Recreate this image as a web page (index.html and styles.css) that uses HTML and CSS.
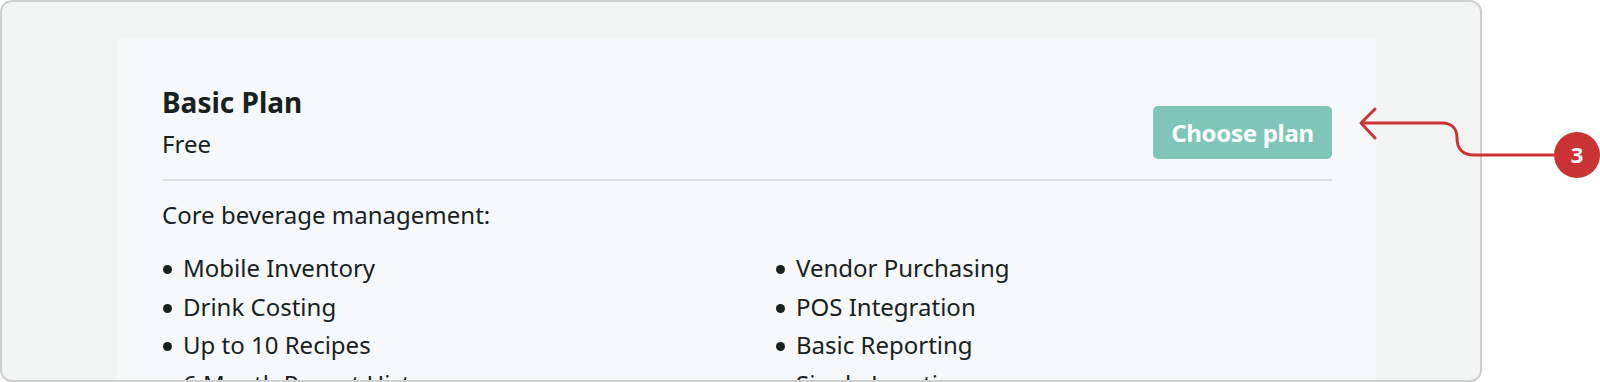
FILE: index.html
```html
<!DOCTYPE html>
<html>
<head>
<meta charset="utf-8">
<link rel="stylesheet" href="styles.css">
</head>
<body>
<div class="frame">
  <div class="card">
    <div class="card-head">
      <div class="plan">
        <div class="plan-name">Basic Plan</div>
        <div class="plan-price">Free</div>
      </div>
      <button class="choose">Choose plan</button>
    </div>
    <div class="divider"></div>
    <p class="intro">Core beverage management:</p>
    <ul class="features">
      <li>Mobile Inventory</li>
      <li>Vendor Purchasing</li>
      <li>Drink Costing</li>
      <li>POS Integration</li>
      <li>Up to 10 Recipes</li>
      <li>Basic Reporting</li>
      <li>6 Month Report History</li>
      <li>Single Location</li>
    </ul>
  </div>
</div>
<svg class="callout" width="1600" height="382" viewBox="0 0 1600 382">
  <path d="M1375 109 L1361 123 L1375 138" fill="none" stroke="#cc3434" stroke-width="3" stroke-linecap="round" stroke-linejoin="round"/>
  <path d="M1362 123 H1442 C1452 123 1457 129 1457 138 C1457 148 1462 155 1474 155 H1556" fill="none" stroke="#cc3434" stroke-width="3" stroke-linecap="round"/>
  <circle cx="1577" cy="155" r="23" fill="#c93333"/>
  <text x="1577" y="163" class="callout-num" text-anchor="middle">3</text>
</svg>
</body>
</html>
```
FILE: styles.css
```css
html, body {
  margin: 0;
  padding: 0;
  background: #ffffff;
}
body {
  width: 1600px;
  height: 382px;
  overflow: hidden;
  position: relative;
  font-family: "Noto Sans", "Inter", sans-serif;
  color: #18211e;
}
.frame {
  width: 1363px;
  height: 342px;
  padding: 36px 0 0 115px;
  border: 2px solid #cfd1d0;
  border-radius: 12px;
  background: #f3f4f4;
  overflow: hidden;
}
.card {
  width: 1170px;
  min-height: 400px;
  padding: 46px 44px 40px 45px;
  background: #f7f8fa;
}
.card-head {
  display: flex;
  justify-content: space-between;
  align-items: flex-end;
  padding-bottom: 19px;
}
.plan-name {
  font-size: 28px;
  line-height: 36px;
  font-weight: 700;
}
.plan-price {
  font-size: 24px;
  line-height: 32px;
  margin-top: 8px;
}
.choose {
  width: 179px;
  height: 53px;
  margin-bottom: 1px;
  padding: 0;
  border: none;
  border-radius: 5px;
  background: #7fc6b8;
  color: #ffffff;
  font-family: "Noto Sans", "Inter", sans-serif;
  font-weight: 700;
  font-size: 24px;
  letter-spacing: -0.3px;
}
.divider {
  height: 2px;
  background: #dddfe1;
}
.intro {
  margin: 15px 0 0;
  font-size: 24px;
  line-height: 38px;
}
.features {
  list-style: none;
  margin: 15px 0 0;
  padding: 0;
  display: grid;
  grid-template-columns: 613px 1fr;
  font-size: 24px;
  line-height: 38.5px;
}
.features li {
  display: flex;
  align-items: center;
}
.features li::before {
  content: "";
  flex: none;
  width: 9px;
  height: 9px;
  margin: 3px 11px 0 1px;
  border-radius: 50%;
  background: #18211e;
}
.callout {
  position: absolute;
  left: 0;
  top: 0;
  pointer-events: none;
}
.callout-num {
  font-family: "Noto Sans", "Inter", sans-serif;
  font-weight: 700;
  font-size: 22px;
  fill: #ffffff;
}
```
